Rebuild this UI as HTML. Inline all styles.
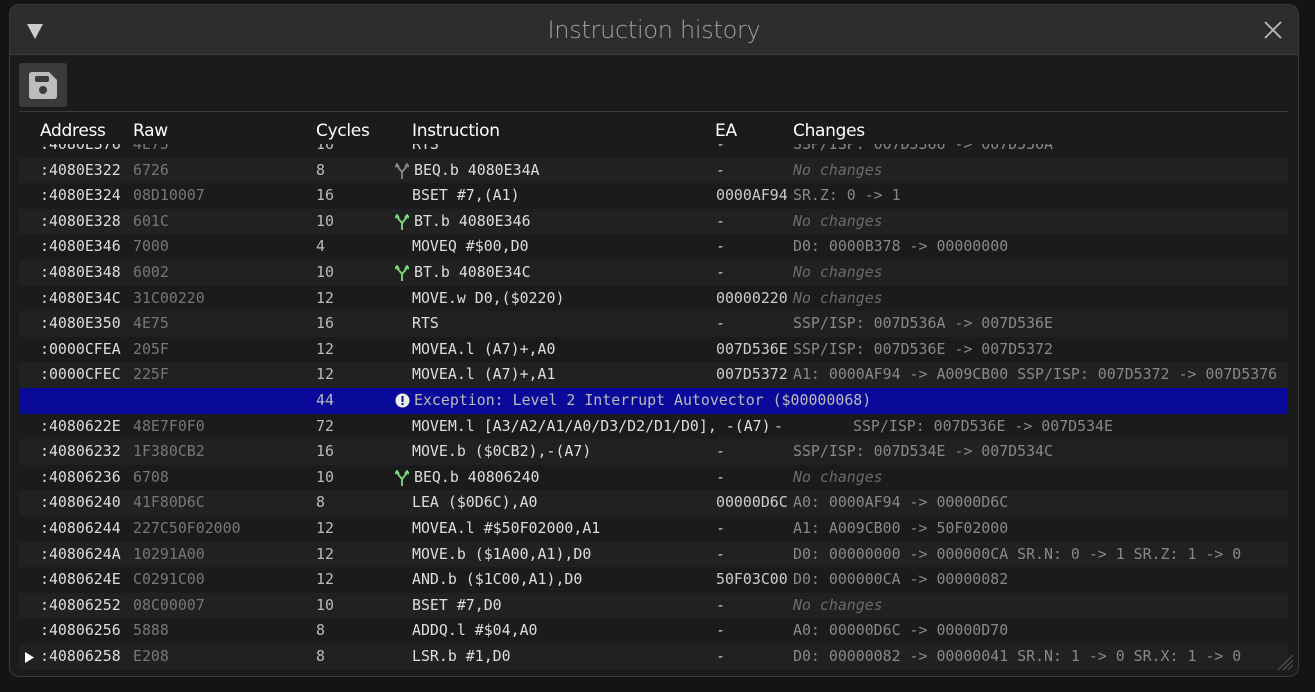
<!DOCTYPE html>
<html><head><meta charset="utf-8"><style>
html,body{margin:0;padding:0;background:#141414;width:1315px;height:692px;overflow:hidden}
.win{position:absolute;left:9px;top:4px;width:1288px;height:671px;background:#1b1b1b;border:1px solid #3a3a3a;border-radius:10px;overflow:hidden}
.title{position:absolute;left:0;top:0;width:1288px;height:49px;background:#2d2d2d;border-bottom:1px solid #3c3c3c}
.title .t{position:absolute;left:0;width:1288px;text-align:center;top:11px;font:24px "DejaVu Sans","Liberation Sans",sans-serif;font-weight:300;color:#a0a0a0;letter-spacing:-0.3px}
.tri{position:absolute;left:17px;top:19px;width:0;height:0;border-left:8px solid transparent;border-right:8px solid transparent;border-top:15px solid #ccc}
.save{position:absolute;left:9px;top:58px;width:48px;height:44px;background:#3b3b3b;border-radius:3px}
.sep{position:absolute;left:9px;top:106px;width:1269px;height:1px;background:#3c3c3c}
.hdr{position:absolute;top:116px;font:17px "DejaVu Sans","Liberation Sans",sans-serif;color:#fff;z-index:3;letter-spacing:-0.3px}
.list{position:absolute;left:9px;top:139px;width:1269px;height:532px;overflow:hidden}
.row{position:absolute;left:0;width:1269px;height:25.6px;font:14.9px "DejaVu Sans Mono","Liberation Mono",monospace;line-height:25.6px;white-space:nowrap}
.row.s{background:#212121}
.row.x{background:#0a0a9a}
.row span{position:absolute;top:0}
.a{left:21px;color:#ddd}.r{left:114px;color:#777}.c{left:297px;color:#bbb}.i{left:393px;color:#ddd}.e{left:697px;color:#ccc}.ch{left:774px;color:#888}
.nc{font-style:italic;color:#6a6a6a !important}
.ic{position:absolute;left:376px;top:5px}
</style></head><body>
<div class="win">
 <div class="title"><div class="tri"></div><div class="t">Instruction history</div>
  <svg style="position:absolute;left:1254px;top:16px" width="18" height="18" viewBox="0 0 18 18"><path d="M1 1L17 17M17 1L1 17" stroke="#bbb" stroke-width="1.8"/></svg></div>
 <div class="save"><svg style="position:absolute;left:10px;top:9px" width="28" height="27" viewBox="0 0 28 27"><path d="M3 0H20L28 8V24Q28 27 25 27H3Q0 27 0 24V3Q0 0 3 0Z" fill="#bdbdbd"/><rect x="6" y="4" width="14" height="6" rx="2" fill="#3b3b3b"/><circle cx="14" cy="18" r="4" fill="#3b3b3b"/></svg></div>
 <div class="sep"></div>
 <div class="hdr" style="left:30px">Address</div>
 <div class="hdr" style="left:123px">Raw</div>
 <div class="hdr" style="left:306px">Cycles</div>
 <div class="hdr" style="left:402px">Instruction</div>
 <div class="hdr" style="left:705px">EA</div>
 <div class="hdr" style="left:783px">Changes</div>
 <div class="list">
<div class="row" style="top:-12px"><span class="a">:4080E376</span><span class="r">4E75</span><span class="c">16</span><span class="i">RTS</span><span class="e">-</span><span class="ch">SSP/ISP: 007D5366 -&gt; 007D536A</span></div>
<div class="row s" style="top:13.6px"><svg class="ic" width="14" height="16" viewBox="0 0 14 16"><path d="M7 16V9L2 3M7 9L12 3M0 4L2 1L4 4M10 4L12 1L14 4" stroke="#888" stroke-width="1.8" fill="none"/></svg><span class="a">:4080E322</span><span class="r">6726</span><span class="c">8</span><span class="i" style="left:395px">BEQ.b 4080E34A</span><span class="e">-</span><span class="ch nc">No changes</span></div>
<div class="row" style="top:39.2px"><span class="a">:4080E324</span><span class="r">08D10007</span><span class="c">16</span><span class="i">BSET #7,(A1)</span><span class="e">0000AF94</span><span class="ch">SR.Z: 0 -&gt; 1</span></div>
<div class="row s" style="top:64.8px"><svg class="ic" width="14" height="16" viewBox="0 0 14 16"><path d="M7 16V9L2 3M7 9L12 3M0 4L2 1L4 4M10 4L12 1L14 4" stroke="#7bdc7b" stroke-width="1.8" fill="none"/></svg><span class="a">:4080E328</span><span class="r">601C</span><span class="c">10</span><span class="i" style="left:395px">BT.b 4080E346</span><span class="e">-</span><span class="ch nc">No changes</span></div>
<div class="row" style="top:90.4px"><span class="a">:4080E346</span><span class="r">7000</span><span class="c">4</span><span class="i">MOVEQ #$00,D0</span><span class="e">-</span><span class="ch">D0: 0000B378 -&gt; 00000000</span></div>
<div class="row s" style="top:116px"><svg class="ic" width="14" height="16" viewBox="0 0 14 16"><path d="M7 16V9L2 3M7 9L12 3M0 4L2 1L4 4M10 4L12 1L14 4" stroke="#7bdc7b" stroke-width="1.8" fill="none"/></svg><span class="a">:4080E348</span><span class="r">6002</span><span class="c">10</span><span class="i" style="left:395px">BT.b 4080E34C</span><span class="e">-</span><span class="ch nc">No changes</span></div>
<div class="row" style="top:141.6px"><span class="a">:4080E34C</span><span class="r">31C00220</span><span class="c">12</span><span class="i">MOVE.w D0,($0220)</span><span class="e">00000220</span><span class="ch nc">No changes</span></div>
<div class="row s" style="top:167.2px"><span class="a">:4080E350</span><span class="r">4E75</span><span class="c">16</span><span class="i">RTS</span><span class="e">-</span><span class="ch">SSP/ISP: 007D536A -&gt; 007D536E</span></div>
<div class="row" style="top:192.8px"><span class="a">:0000CFEA</span><span class="r">205F</span><span class="c">12</span><span class="i">MOVEA.l (A7)+,A0</span><span class="e">007D536E</span><span class="ch">SSP/ISP: 007D536E -&gt; 007D5372</span></div>
<div class="row s" style="top:218.4px"><span class="a">:0000CFEC</span><span class="r">225F</span><span class="c">12</span><span class="i">MOVEA.l (A7)+,A1</span><span class="e">007D5372</span><span class="ch">A1: 0000AF94 -&gt; A009CB00 SSP/ISP: 007D5372 -&gt; 007D5376</span></div>
<div class="row x" style="top:244px"><svg class="ic" style="top:5px" width="15" height="15" viewBox="0 0 15 15"><circle cx="7.5" cy="7.5" r="7" fill="#eee"/><rect x="6.5" y="3" width="2" height="6" fill="#0a0a9a"/><rect x="6.5" y="10" width="2" height="2" fill="#0a0a9a"/></svg><span class="c">44</span><span class="i" style="left:395px;color:#bbb">Exception: Level 2 Interrupt Autovector ($00000068)</span></div>
<div class="row" style="top:269.6px"><span class="a">:4080622E</span><span class="r">48E7F0F0</span><span class="c">72</span><span class="i">MOVEM.l [A3/A2/A1/A0/D3/D2/D1/D0], -(A7)</span><span class="e" style="left:755px">-</span><span class="ch" style="left:834px">SSP/ISP: 007D536E -&gt; 007D534E</span></div>
<div class="row s" style="top:295.2px"><span class="a">:40806232</span><span class="r">1F380CB2</span><span class="c">16</span><span class="i">MOVE.b ($0CB2),-(A7)</span><span class="e">-</span><span class="ch">SSP/ISP: 007D534E -&gt; 007D534C</span></div>
<div class="row" style="top:320.8px"><svg class="ic" width="14" height="16" viewBox="0 0 14 16"><path d="M7 16V9L2 3M7 9L12 3M0 4L2 1L4 4M10 4L12 1L14 4" stroke="#7bdc7b" stroke-width="1.8" fill="none"/></svg><span class="a">:40806236</span><span class="r">6708</span><span class="c">10</span><span class="i" style="left:395px">BEQ.b 40806240</span><span class="e">-</span><span class="ch nc">No changes</span></div>
<div class="row s" style="top:346.4px"><span class="a">:40806240</span><span class="r">41F80D6C</span><span class="c">8</span><span class="i">LEA ($0D6C),A0</span><span class="e">00000D6C</span><span class="ch">A0: 0000AF94 -&gt; 00000D6C</span></div>
<div class="row" style="top:372px"><span class="a">:40806244</span><span class="r">227C50F02000</span><span class="c">12</span><span class="i">MOVEA.l #$50F02000,A1</span><span class="e">-</span><span class="ch">A1: A009CB00 -&gt; 50F02000</span></div>
<div class="row s" style="top:397.6px"><span class="a">:4080624A</span><span class="r">10291A00</span><span class="c">12</span><span class="i">MOVE.b ($1A00,A1),D0</span><span class="e">-</span><span class="ch">D0: 00000000 -&gt; 000000CA SR.N: 0 -&gt; 1 SR.Z: 1 -&gt; 0</span></div>
<div class="row" style="top:423.2px"><span class="a">:4080624E</span><span class="r">C0291C00</span><span class="c">12</span><span class="i">AND.b ($1C00,A1),D0</span><span class="e">50F03C00</span><span class="ch">D0: 000000CA -&gt; 00000082</span></div>
<div class="row s" style="top:448.8px"><span class="a">:40806252</span><span class="r">08C00007</span><span class="c">10</span><span class="i">BSET #7,D0</span><span class="e">-</span><span class="ch nc">No changes</span></div>
<div class="row" style="top:474.4px"><span class="a">:40806256</span><span class="r">5888</span><span class="c">8</span><span class="i">ADDQ.l #$04,A0</span><span class="e">-</span><span class="ch">A0: 00000D6C -&gt; 00000D70</span></div>
<div class="row s" style="top:500px"><svg style="position:absolute;left:6px;top:8px" width="9" height="11" viewBox="0 0 9 11"><path d="M0 0L9 5.5L0 11Z" fill="#fff"/></svg><span class="a">:40806258</span><span class="r">E208</span><span class="c">8</span><span class="i">LSR.b #1,D0</span><span class="e">-</span><span class="ch">D0: 00000082 -&gt; 00000041 SR.N: 1 -&gt; 0 SR.X: 1 -&gt; 0</span></div>
 </div>
 <svg style="position:absolute;left:1266px;top:648px" width="18" height="18" viewBox="0 0 18 18"><path d="M2 17L17 2M7 17L17 7M12 17L17 12" stroke="#555" stroke-width="1.2"/></svg>
</div>
</body></html>
